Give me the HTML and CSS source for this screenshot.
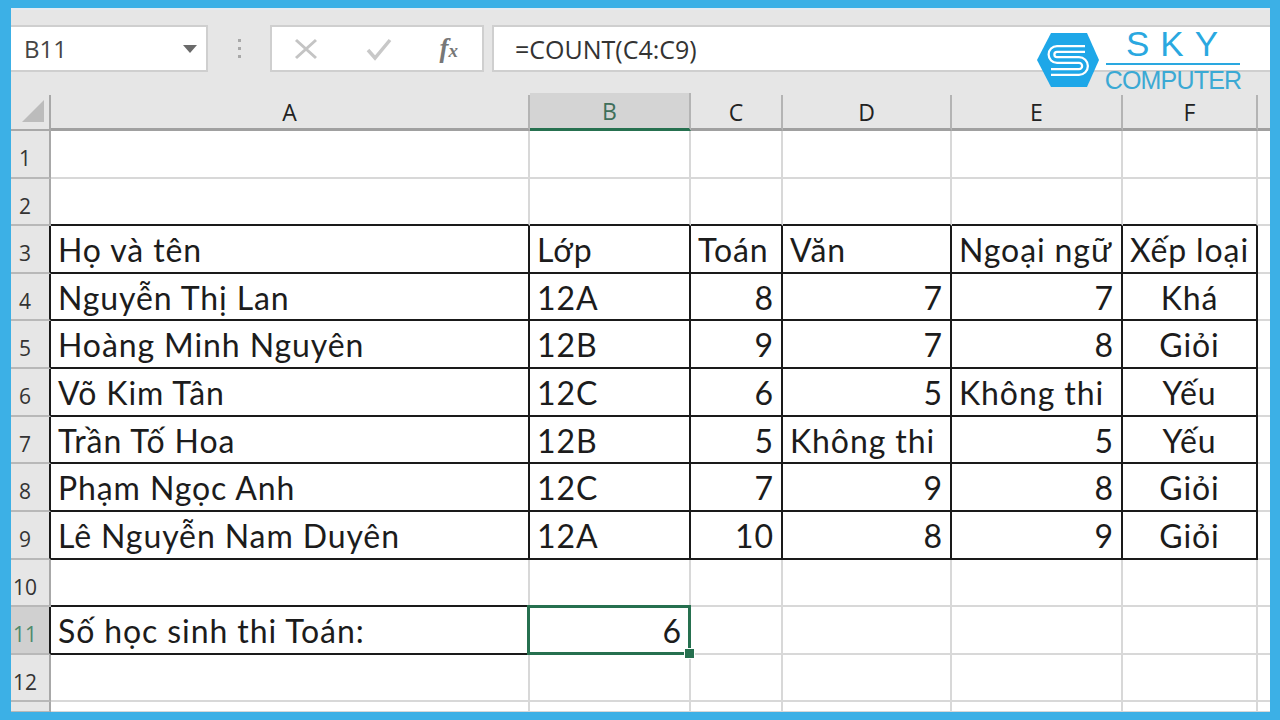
FILE: index.html
```html
<!DOCTYPE html>
<html lang="vi">
<head>
  <meta charset="UTF-8">
  <meta name="viewport" content="width=device-width, initial-scale=1.0">
  <title>COUNT - Sky Computer</title>
  <link rel="stylesheet" href="styles.css">
</head>
<body>
  <div class="window">
    <div class="top-strip"></div>
    <div class="formula-bar">
      <div class="name-box">
        <span>B11</span>
        <svg width="16" height="8" viewBox="0 0 16 8"><path d="M1 0h14L8 8z" fill="#6a6a6a"/></svg>
      </div>
      <div class="grip"><i></i><i></i><i></i></div>
      <div class="fx-box">
        <svg width="24" height="22" viewBox="0 0 24 22"><path d="M2 2l20 18M22 2L2 20" stroke="#c4c4c4" stroke-width="3" fill="none"/></svg>
        <svg width="28" height="24" viewBox="0 0 28 24"><path d="M3 13l7 8L25 3" stroke="#c8c8c8" stroke-width="3.5" fill="none"/></svg>
        <span class="fx">f<small>x</small></span>
      </div>
      <div class="formula">=COUNT(C4:C9)</div>
    </div>

    <!-- bang tinh -->
    <div class="sheet">
      <div class="head corner"><svg width="22" height="22" viewBox="0 0 22 22"><path d="M22 0v22H0z" fill="#bcbcbc"/></svg></div>
      <div class="head col">A</div>
      <div class="head col active">B</div>
      <div class="head col">C</div>
      <div class="head col">D</div>
      <div class="head col">E</div>
      <div class="head col">F</div>
      <div class="head col end"></div>

      <div class="head row">1</div>
      <div class="cell"></div><div class="cell"></div><div class="cell"></div><div class="cell"></div><div class="cell"></div><div class="cell"></div><div class="cell"></div>

      <div class="head row">2</div>
      <div class="cell bb"></div><div class="cell bb"></div><div class="cell bb"></div><div class="cell bb"></div><div class="cell bb"></div><div class="cell bb"></div><div class="cell"></div>

      <div class="head row br">3</div>
      <div class="cell box">Họ và tên</div><div class="cell box">Lớp</div><div class="cell box">Toán</div><div class="cell box">Văn</div><div class="cell box">Ngoại ngữ</div><div class="cell box">Xếp loại</div><div class="cell"></div>

      <div class="head row br">4</div>
      <div class="cell box">Nguyễn Thị Lan</div><div class="cell box">12A</div><div class="cell box num">8</div><div class="cell box num">7</div><div class="cell box num">7</div><div class="cell box mid">Khá</div><div class="cell"></div>

      <div class="head row br">5</div>
      <div class="cell box">Hoàng Minh Nguyên</div><div class="cell box">12B</div><div class="cell box num">9</div><div class="cell box num">7</div><div class="cell box num">8</div><div class="cell box mid">Giỏi</div><div class="cell"></div>

      <div class="head row br">6</div>
      <div class="cell box">Võ Kim Tân</div><div class="cell box">12C</div><div class="cell box num">6</div><div class="cell box num">5</div><div class="cell box">Không thi</div><div class="cell box mid">Yếu</div><div class="cell"></div>

      <div class="head row br">7</div>
      <div class="cell box">Trần Tố Hoa</div><div class="cell box">12B</div><div class="cell box num">5</div><div class="cell box">Không thi</div><div class="cell box num">5</div><div class="cell box mid">Yếu</div><div class="cell"></div>

      <div class="head row br">8</div>
      <div class="cell box">Phạm Ngọc Anh</div><div class="cell box">12C</div><div class="cell box num">7</div><div class="cell box num">9</div><div class="cell box num">8</div><div class="cell box mid">Giỏi</div><div class="cell"></div>

      <div class="head row br">9</div>
      <div class="cell box">Lê Nguyễn Nam Duyên</div><div class="cell box">12A</div><div class="cell box num">10</div><div class="cell box num">8</div><div class="cell box num">9</div><div class="cell box mid">Giỏi</div><div class="cell"></div>

      <div class="head row">10</div>
      <div class="cell bb"></div><div class="cell"></div><div class="cell"></div><div class="cell"></div><div class="cell"></div><div class="cell"></div><div class="cell"></div>

      <div class="head row br active">11</div>
      <div class="cell bb">Số học sinh thi Toán:</div>
      <div class="cell num selected">6<span class="sel-frame"></span><span class="sel-handle"></span></div>
      <div class="cell"></div><div class="cell"></div><div class="cell"></div><div class="cell"></div><div class="cell"></div>

      <div class="head row">12</div>
      <div class="cell"></div><div class="cell"></div><div class="cell"></div><div class="cell"></div><div class="cell"></div><div class="cell"></div><div class="cell"></div>

      <div class="head row"></div>
      <div class="cell"></div><div class="cell"></div><div class="cell"></div><div class="cell"></div><div class="cell"></div><div class="cell"></div><div class="cell"></div>
    </div>

    <div class="logo">
      <svg class="logo-mark" width="62" height="54" viewBox="0 0 62 54">
        <path d="M14 0h36l12 27-12 27H14L0 27z" fill="#1ea7e8"/>
        <path d="M48 16H20a5.5 5.5 0 0 0 0 11h22a6 6 0 0 1 0 12H14" fill="none" stroke="#fff" stroke-width="8"/>
        <path d="M48 16H20a5.5 5.5 0 0 0 0 11h22a6 6 0 0 1 0 12H14" fill="none" stroke="#1ea7e8" stroke-width="3.5"/>
      </svg>
      <div class="logo-text">
        <div class="logo-sky">SKY</div>
        <div class="logo-line"></div>
        <div class="logo-computer">COMPUTER</div>
      </div>
    </div>
  </div>
</body>
</html>
```

FILE: styles.css
```css
html, body {
  margin: 0;
  padding: 0;
  height: 100%;
  overflow: hidden;
}
body {
  background-color: #3cb0e6;
  font-family: Lato, "Noto Sans", sans-serif;
  padding: 8px 10px 8px 11px;
  box-sizing: border-box;
}
.window {
  position: relative;
  height: 704px;
  background: #e6e6e6;
  overflow: hidden;
  display: flex;
  flex-direction: column;
}
.top-strip {
  height: 15px;
  flex: none;
  border-top: 2px solid #e4ebf2;
}
.formula-bar {
  height: 47px;
  flex: none;
  display: flex;
  margin-bottom: 23px;
}
.name-box {
  width: 197px;
  box-sizing: border-box;
  background: white;
  border: 2px solid #cfcfcf;
  border-left: none;
  display: flex;
  justify-content: space-between;
  align-items: center;
  padding: 0 8px 0 13px;
  font-family: "Open Sans", sans-serif;
  font-size: 24px;
  color: #444;
}
.grip {
  width: 62px;
  display: flex;
  flex-direction: column;
  align-items: center;
  justify-content: center;
  gap: 5px;
}
.grip i {
  width: 3px;
  height: 3px;
  background: #a8a8a8;
}
.fx-box {
  width: 214px;
  box-sizing: border-box;
  background: white;
  border: 2px solid #cfcfcf;
  display: flex;
  align-items: center;
  justify-content: space-between;
  padding: 0 24px 0 22px;
}
.fx {
  font-family: "Liberation Serif", serif;
  font-style: italic;
  font-weight: bold;
  font-size: 27px;
  color: #777;
}
.fx small {
  font-size: 19px;
}
.formula {
  flex: 1;
  margin-left: 8px;
  background: white;
  border: 2px solid #cfcfcf;
  border-right: none;
  display: flex;
  align-items: center;
  padding-left: 21px;
  font-family: "Open Sans", sans-serif;
  font-size: 25px;
  color: #333;
}
.sheet {
  display: grid;
  flex: none;
  grid-template-columns: 40px 479px 161px 92px 169px 171px 135px 12px;
  grid-template-rows: 36px 48px 47px 48px 47px 48px 48px 47px 48px 48px 47px 48px 47px 11px;
  background: white;
}
.head {
  box-sizing: border-box;
  background: #e6e6e6;
  color: #222;
  display: flex;
  align-items: center;
  justify-content: center;
  font-family: "Open Sans", sans-serif;
}
.corner {
  align-items: flex-end;
  justify-content: flex-end;
  padding: 0 5px 7px 0;
  border-right: 2px solid #a8a8a8;
  border-bottom: 2px solid #a8a8a8;
}
.col {
  font-size: 23px;
  border-bottom: 3px solid #a0a0a0;
  border-right: 2px solid #b4b4b4;
}
.col.end {
  border-right: none;
}
.col.active {
  background: #d4d4d4;
  color: #3f6f5a;
  border-bottom-color: #26704f;
  margin-top: -2px;
}
.row {
  border-right: 2px solid #a8a8a8;
  border-bottom: 2px solid #b8b8b8;
  font-size: 21px;
  padding: 8px 10px 0 0;
  color: #333;
}
.row.active {
  background: #d0d0d0;
  color: #4e8a6c;
}
.row.br {
  border-right-color: #1a1a1a;
}
.cell {
  box-sizing: border-box;
  border-right: 2px solid #d8d8d8;
  border-bottom: 2px solid #d8d8d8;
  display: flex;
  align-items: center;
  padding: 1px 7px 0;
  font-size: 32px;
  letter-spacing: 0.9px;
  color: #1c1c1c;
  white-space: nowrap;
}
.cell.bb {
  border-bottom-color: #1a1a1a;
}
.cell.box {
  border-right-color: #1a1a1a;
  border-bottom-color: #1a1a1a;
}
.num {
  justify-content: flex-end;
}
.mid {
  justify-content: center;
}
.selected {
  position: relative;
}
.sel-frame {
  position: absolute;
  top: -2px;
  left: -3px;
  right: -2px;
  bottom: -2px;
  border: 3px solid #26704f;
}
.sel-handle {
  position: absolute;
  right: -6px;
  bottom: -6px;
  width: 9px;
  height: 9px;
  background: #26704f;
  border: 1px solid white;
}
.logo {
  position: absolute;
  top: 25px;
  left: 1026px;
  display: flex;
  gap: 6px;
}
.logo-mark {
  flex: none;
}
.logo-text {
  display: flex;
  flex-direction: column;
  align-items: center;
  width: 136px;
}
.logo-sky {
  font-family: "Liberation Sans", sans-serif;
  font-size: 35px;
  line-height: 28px;
  letter-spacing: 11px;
  color: #2aa8e0;
  margin: -3px 0 0 9px;
}
.logo-line {
  width: 134px;
  height: 2px;
  margin: 5px 0 4px;
  background: #2aa8e0;
}
.logo-computer {
  font-family: "Liberation Sans", sans-serif;
  font-size: 25px;
  line-height: 22px;
  letter-spacing: -0.8px;
  color: #3ba9d4;
}
```
